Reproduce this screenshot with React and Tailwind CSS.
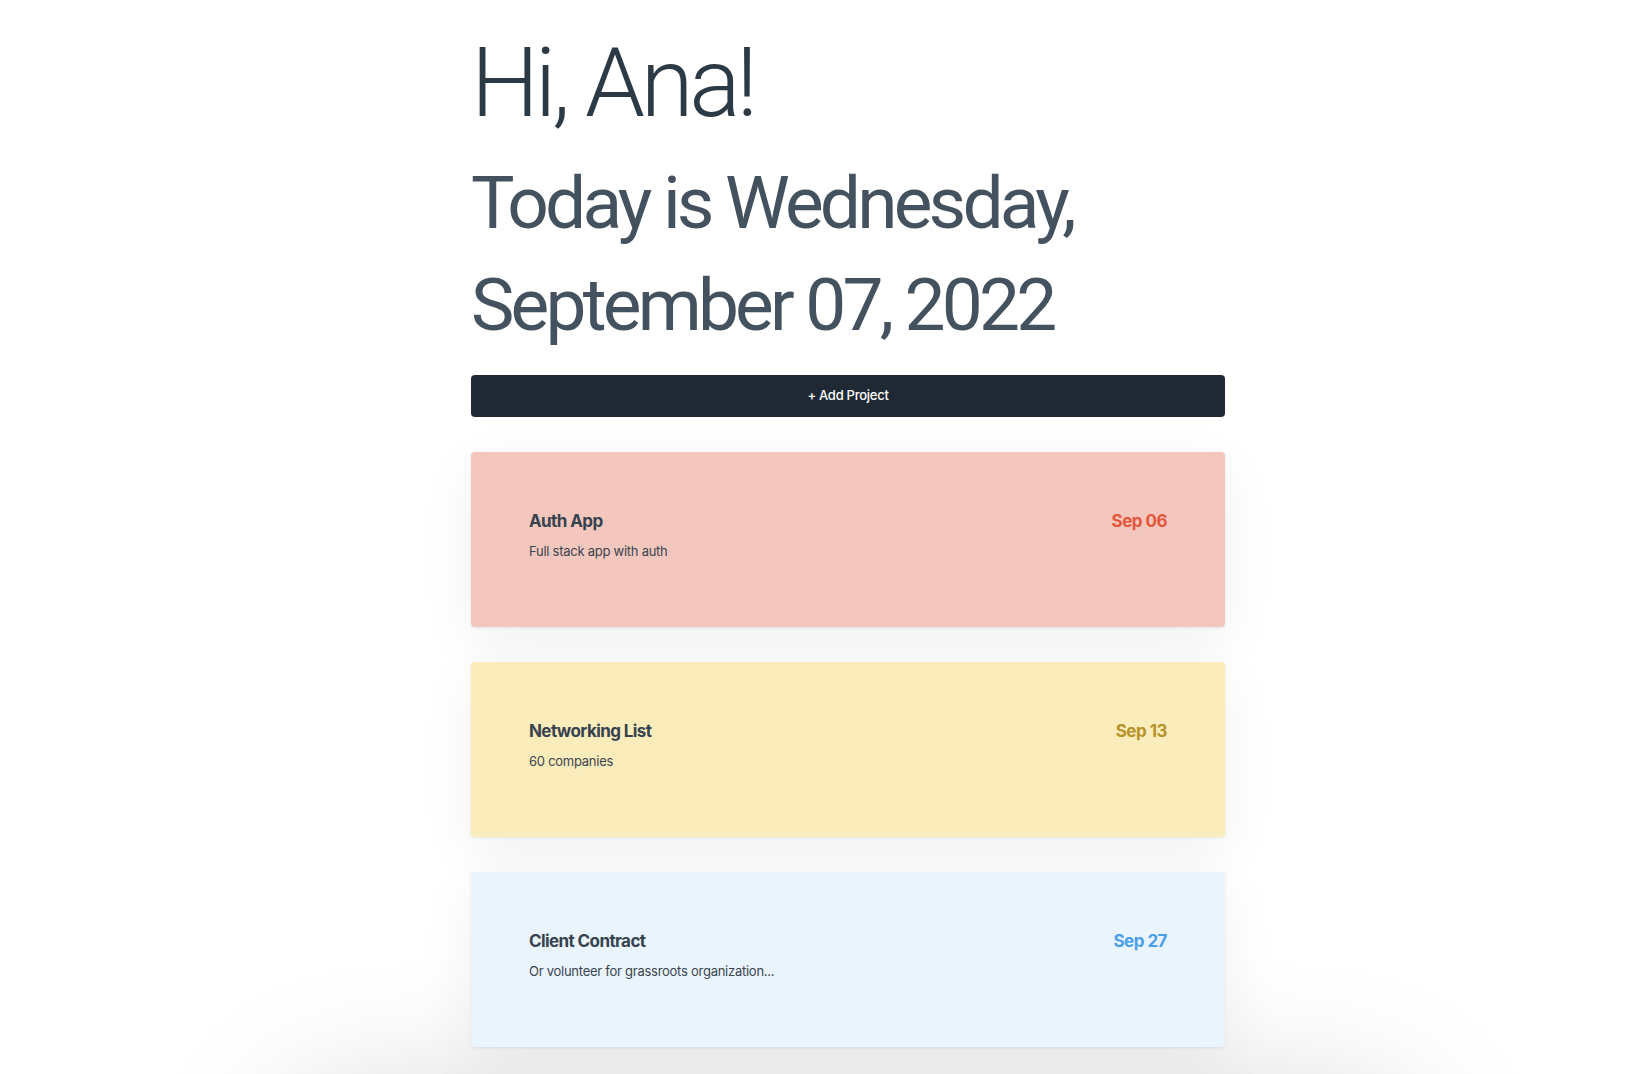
import React from 'react';

const projects = [
  {
    title: 'Auth App',
    desc: 'Full stack app with auth',
    date: 'Sep 06',
    bg: 'bg-[#f3c7bd]',
    dateColor: 'text-[#e5553a]',
  },
  {
    title: 'Networking List',
    desc: '60 companies',
    date: 'Sep 13',
    bg: 'bg-[#fbecbb]',
    dateColor: 'text-[#b8922a]',
  },
  {
    title: 'Client Contract',
    desc: 'Or volunteer for grassroots organization...',
    date: 'Sep 27',
    bg: 'bg-[#eaf4fd]',
    dateColor: 'text-[#4a9fec]',
  },
];

const ProjectCard = ({ project }) => (
  <div
    className={`${project.bg} relative z-[1] h-[175px] rounded-[4px] px-[58px] pt-[57px] shadow-[0_1px_3px_rgba(0,0,0,0.08),0_16px_60px_rgba(0,0,0,0.06)]`}
  >
    <div className="flex items-center justify-between">
      <h3 className="text-[17px] leading-[24px] font-bold tracking-[-0.035em] text-[#36434f]">{project.title}</h3>
      <span className={`text-[17px] leading-[24px] font-bold tracking-[-0.03em] ${project.dateColor}`}>{project.date}</span>
    </div>
    <p className="mt-[8px] text-[13px] leading-[20px] tracking-[-0.02em] text-[#3a4550]">{project.desc}</p>
  </div>
);

export default function App() {
  return (
    <div className="min-h-screen bg-white overflow-hidden font-['Inter','Liberation_Sans',sans-serif]">
      <div className="w-[754px] ml-[471px] pt-[35px]">
        {/* Greeting */}
        <div className="font-['Roboto','Inter',sans-serif]">
          <h1 className="text-[96px] leading-[96px] font-light tracking-[-0.045em] text-[#2c3a46]">Hi, Ana!</h1>
          <h2 className="mt-[21px] text-[73px] leading-[102px] font-normal tracking-[-0.052em] text-[#44525f]">
            Today is Wednesday,
            <br />
            September 07, 2022
          </h2>
        </div>

        {/* Add button */}
        <button className="mt-[19px] w-full h-[42px] rounded-[4px] bg-[#1f2933] text-white text-[13px] font-medium tracking-[-0.02em]">
          + Add Project
        </button>

        {/* Project list */}
        <div className="mt-[35px] flex flex-col gap-[35px]">
          {projects.map((p, i) => (
            <ProjectCard key={i} project={p} />
          ))}
          <div className="h-[175px] bg-white rounded-[4px] shadow-[0_210px_160px_170px_rgba(0,0,0,0.24)]" />
        </div>
      </div>
    </div>
  );
}
